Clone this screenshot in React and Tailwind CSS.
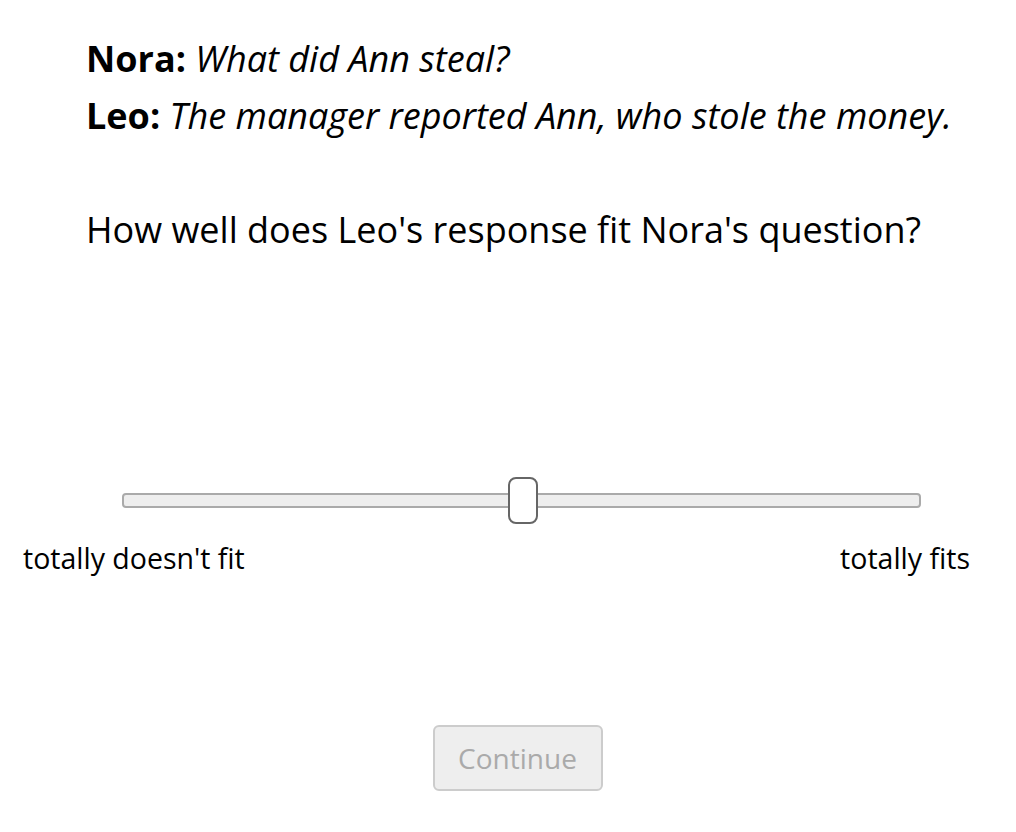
export default function App() {
    return (
        <div className="min-h-screen bg-white text-black" style={{ fontFamily: '"Open Sans", sans-serif' }}>
            <div className="pl-[86px] pt-[30px]">
                <p className="text-[36px] leading-[57px]">
                    <span className="font-bold">Nora:</span> <i>What did Ann steal?</i>
                </p>
                <p className="text-[36px] leading-[57px]">
                    <span className="font-bold">Leo:</span> <i>The manager reported Ann, who stole the money.</i>
                </p>
                <p className="mt-[64px] text-[36px] leading-[44px]">How well does Leo's response fit Nora's question?</p>
            </div>

            <div className="mt-[241px] pl-[122px] pr-[95px]">
                <div className="relative h-[15px] rounded-[4px] border-2 border-[#aaa] bg-[#eee]">
                    <div className="absolute left-[384px] top-[-18px] h-[47px] w-[30px] rounded-[8px] border-2 border-[#666] bg-white"></div>
                </div>
            </div>

            <div className="mt-[30px] flex justify-between pl-[23px] pr-[46px] text-[28.5px] leading-[40px]">
                <span>totally doesn't fit</span>
                <span>totally fits</span>
            </div>

            <div className="mt-[147px] flex justify-center pl-[19px]">
                <button disabled className="h-[66px] w-[170px] rounded-[6px] border-2 border-[#ccc] bg-[#eee] text-[28px] text-[#aaa]">
                    Continue
                </button>
            </div>
        </div>
    );
}
